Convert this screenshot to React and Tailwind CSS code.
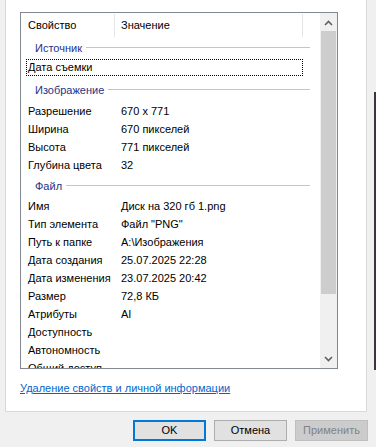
import React from "react";

const font = { fontFamily: '"Liberation Sans", Arial, sans-serif' };

function Group({ title, h, pad = "" }) {
  return (
    <div className={`shrink-0 flex items-center pl-[14px] pr-[10px] ${h} ${pad}`}>
      <span className="text-[11px] leading-[16px] text-[#1e3287]">{title}</span>
      <div className="ml-[4px] h-px flex-1 bg-[#bcc3dd]" />
    </div>
  );
}

function Row({ name, value }) {
  return (
    <div className="shrink-0 flex h-[18px] text-[11px] leading-[18px] text-black whitespace-nowrap">
      <div className="w-[94px] pl-[7px]">{name}</div>
      <div className="pl-[6px]">{value}</div>
    </div>
  );
}

function Chevron({ down }) {
  return (
    <svg width="9" height="6" viewBox="0 0 9 6" className={down ? "rotate-180" : ""}>
      <path d="M1 5 L4.5 1.5 L8 5" fill="none" stroke="#606060" strokeWidth="1.6" />
    </svg>
  );
}

export default function App() {
  return (
    <div className="w-[376px] h-[447px] bg-[#f0f0f0] overflow-hidden flex" style={font}>
      <div className="w-[374px] shrink-0">
        <div className="ml-[5px] w-[362px] h-[412px] bg-white border-l border-r border-b border-[#d9d9d9] pt-[12px] pl-[14px]">
          <div className="w-[318px] h-[357px] border border-[#828790] flex">
            <div className="flex-1 flex flex-col overflow-hidden">
              <div className="shrink-0 flex h-[25px] text-[11px] text-black">
                <div className="w-[93px] pl-[7px] leading-[25px]">Свойство</div>
                <div className="w-px bg-[#e5e5e5] my-[1px]" />
                <div className="w-[187px] pl-[6px] leading-[25px]">Значение</div>
                <div className="w-px bg-[#e5e5e5] my-[1px]" />
              </div>
              <Group title="Источник" h="h-[21px]" pad="pb-[2px]" />
              <div className="shrink-0 h-[18px] pl-[5px]">
                <div className="w-[277px] h-[17px] border border-dotted border-black flex text-[11px] leading-[15px] text-black">
                  <div className="pl-[1px]">Дата съемки</div>
                </div>
              </div>
              <Group title="Изображение" h="h-[25px]" />
              <Row name="Разрешение" value="670 x 771" />
              <Row name="Ширина" value="670 пикселей" />
              <Row name="Высота" value="771 пикселей" />
              <Row name="Глубина цвета" value="32" />
              <Group title="Файл" h="h-[23px]" />
              <Row name="Имя" value="Диск на 320 гб 1.png" />
              <Row name="Тип элемента" value='Файл "PNG"' />
              <Row name="Путь к папке" value="A:\Изображения" />
              <Row name="Дата создания" value="25.07.2025 22:28" />
              <Row name="Дата изменения" value="23.07.2025 20:42" />
              <Row name="Размер" value="72,8 КБ" />
              <Row name="Атрибуты" value="AI" />
              <Row name="Доступность" value="" />
              <Row name="Автономность" value="" />
              <Row name="Общий доступ" value="" />
            </div>
            <div className="w-[17px] bg-[#f0f0f0] flex flex-col">
              <div className="shrink-0 h-[18px] flex items-center justify-center pt-[2px]">
                <Chevron />
              </div>
              <div className="shrink-0 mx-[1px] h-[263px] bg-[#cdcdcd]" />
              <div className="flex-1" />
              <div className="shrink-0 h-[18px] flex items-center justify-center">
                <Chevron down />
              </div>
            </div>
          </div>
          <div className="mt-[11px] text-[11px] leading-[16px] text-[#0066cc] underline">
            Удаление свойств и личной информации
          </div>
        </div>
        <div className="flex justify-end gap-[8px] pr-[6px] mt-[8px] text-[11px]">
          <button className="w-[73px] h-[21px] border-2 border-[#0078d7] bg-[#e1e1e1] text-black leading-[17px]">OK</button>
          <button className="w-[73px] h-[21px] border border-[#adadad] bg-[#e1e1e1] text-black leading-[19px]">Отмена</button>
          <button className="w-[73px] h-[21px] border border-[#bfbfbf] bg-[#cccccc] text-[#838383] leading-[19px]">Применить</button>
        </div>
      </div>
      <div className="w-[2px] flex flex-col">
        <div className="h-[92px]" />
        <div className="h-[278px] bg-[#3f3340]" />
      </div>
    </div>
  );
}
